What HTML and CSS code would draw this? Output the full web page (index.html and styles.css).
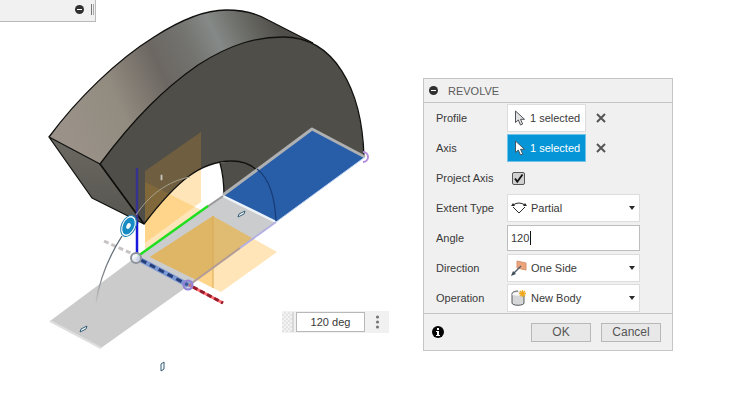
FILE: index.html
```html
<!DOCTYPE html>
<html lang="en">
<head>
<meta charset="utf-8">
<title>Revolve</title>
<link rel="stylesheet" href="styles.css">
</head>
<body>
<main class="workspace">
  <svg class="model" viewBox="0 0 400 403" aria-hidden="true">
    <defs>
      <linearGradient id="outer" gradientUnits="userSpaceOnUse" x1="75" y1="150" x2="290" y2="50">
        <stop offset="0" stop-color="#9a9288"/>
        <stop offset=".25" stop-color="#928b80"/>
        <stop offset=".47" stop-color="#6c6762"/>
        <stop offset=".62" stop-color="#73736f"/>
        <stop offset=".74" stop-color="#858987"/>
        <stop offset=".86" stop-color="#6c6d68"/>
        <stop offset="1" stop-color="#504e48"/>
      </linearGradient>
      <linearGradient id="end" x1="0" y1="0" x2="0" y2="1">
        <stop offset="0" stop-color="#6c6963"/>
        <stop offset="1" stop-color="#57554f"/>
      </linearGradient>
      <linearGradient id="arcfade" x1="0" y1="0" x2="0" y2="1">
        <stop offset="0" stop-color="#52606f"/>
        <stop offset=".6" stop-color="#84898e"/>
        <stop offset="1" stop-color="#c4c4c4"/>
      </linearGradient>
      <clipPath id="face">
        <path d="M100 164C135 117 165 88 198 65C232 43 258 37 283 37C334 37 362 88 364 157L276 222C275 184 258 161 232 161C200 161 176 182 144 224Z"/>
      </clipPath>
      <clipPath id="sketch"><path d="M136 257L223 196L276 222L188 286Z"/></clipPath>
    </defs>

    <!-- sketch profile lying on the ground plane -->
    <path fill="#cbcbcb" d="M50 321L136 257L188 286L101 348Z"/>
    <path d="M50 321L101 348" stroke="#dedede" stroke-width="2"/>
    <path fill="#cbcccd" d="M136 257L223 196L276 222L188 286Z"/>

    <!-- origin planes -->
    <g fill="#ffbd4a" fill-opacity=".4">
      <path d="M145 165L201 132V202L145 243Z"/>
      <path d="M145 182L213 216V288L145 252Z"/>
      <path d="M150 257L213 216L277 252L221 292Z"/>
    </g>
    <g clip-path="url(#sketch)">
      <path fill="#cbcccd" d="M136 257L223 196L276 222L188 286Z"/>
      <path fill="#e0bb72" d="M150 257L213 216L277 252L221 292Z"/>
      <path fill="#dfb665" d="M150 257L213 216V288Z"/>
    </g>
    <path d="M213 216V288" stroke="#d9a957"/>

    <!-- revolved body -->
    <path fill="#504e48" d="M220 163C223 174 224 184 224 196L276 222C275 184 258 161 232 161Z"/>
    <path fill="url(#outer)" d="M49 137C77 99 117 60 154 37C182 19 206 10 226 10C244 10 258 14 268 20L313 43L330 60L100 164Z"/>
    <path fill="url(#end)" d="M49 137L100 164L144 224L92 198Z"/>
    <path fill="#504e48" d="M100 164C135 117 165 88 198 65C232 43 258 37 283 37C334 37 362 88 364 157L276 222C275 184 258 161 232 161C200 161 176 182 144 224Z"/>
    <g clip-path="url(#face)" fill="#a27b35">
      <path fill-opacity=".38" d="M145 171L201 132V202L145 243Z"/>
      <path fill-opacity=".35" d="M145 182L213 216V288L145 252Z"/>
    </g>
    <g fill="none" stroke="#11110f" stroke-width="1.3" stroke-linejoin="round">
      <path d="M49 137C77 99 117 60 154 37C182 19 206 10 226 10C244 10 258 14 268 20L313 43"/>
      <path d="M49 137L100 164L144 224L92 198Z"/>
      <path d="M144 224L100 164C135 117 165 88 198 65C232 43 258 37 283 37C334 37 362 88 364 157"/>
      <path d="M144 224C176 182 200 161 232 161C258 161 275 184 276 222M220 163C223 174 224 184 224 196"/>
    </g>

    <!-- selected profile -->
    <path fill="#285da8" d="M223 196L312 129L365 157L276 222Z"/>
    <path d="M223 195L312 129L365 157" fill="none" stroke="#aeb0b2" stroke-width="3" stroke-linejoin="round"/>
    <path d="M223 196L276 222" stroke="#edf3fb" stroke-width="2.5"/>
    <path d="M276 222L365 157" stroke="#b9d0f2"/>
    <path d="M257 169C270 179 275 199 276 221" fill="none" stroke="#183d78" stroke-width="1.3"/>
    <path d="M363 152A5 5 0 1 1 363 162" fill="none" stroke="#b58bdc" stroke-width="2"/>

    <!-- axes -->
    <path d="M276 222L240 248" stroke="#b3b0e4" stroke-width="2"/>
    <path d="M240 248L188 286" stroke="#b29c98" stroke-width="2"/>
    <path d="M207 207L223 196" stroke="#989898" stroke-width="2"/>
    <path d="M138 256L208 206" stroke="#20df20" stroke-width="2.5"/>
    <path d="M137 168V224" stroke="#35338f" stroke-width="2.5"/>
    <path d="M137 222V254" stroke="#1919dc" stroke-width="2.5"/>
    <path d="M104 241L133 254" stroke="#c8c4c4" stroke-width="3" stroke-dasharray="5 3"/>
    <path d="M137 258L188 285" stroke="#7a98d4" stroke-width="5"/>
    <path d="M141 260L188 285" stroke="#253d78" stroke-width="3" stroke-dasharray="6 4"/>
    <path d="M189 285L223 303" stroke="#ff6b70" stroke-width="3"/>
    <path d="M193 287L223 303" stroke="#931d2d" stroke-width="3" stroke-dasharray="5 3"/>
    <circle cx="136" cy="258" r="5" fill="#ebeff5" fill-opacity=".7" stroke="#8e949d" stroke-width="2"/>
    <circle cx="188" cy="285" r="4.5" fill="#6581c4" fill-opacity=".4" stroke="#9180d5" stroke-width="2"/>

    <!-- rotation manipulator -->
    <path d="M190 177C168 181 149 195 136 215" fill="none" stroke="#a5a18f"/>
    <path d="M122 236C108 258 99 282 96 303" fill="none" stroke="url(#arcfade)" stroke-width="1.3"/>
    <g transform="rotate(25 128.500 226)">
      <ellipse cx="128.500" cy="226" rx="7" ry="11" fill="#fff" stroke="#2584af"/>
      <ellipse cx="128.500" cy="226" rx="5.500" ry="9" fill="#168bc4"/>
      <ellipse cx="128.500" cy="226" rx="2" ry="3" fill="#fff"/>
    </g>
    <g fill="#f8fcff" stroke="#355d75" stroke-linejoin="round">
      <path d="M80 332L81 329L87 326L86 329Z"/>
      <path d="M238 217L239 214L245 211L244 214Z"/>
      <path d="M161 371V364L164 362V369Z"/>
      <path stroke="#b8b5a8" d="M161 175H162V180H161Z"/>
    </g>
  </svg>

  <div class="browser-bar">
    <button class="round-minus" aria-label="Collapse browser"></button>
    <span class="bar-grip"></span>
  </div>

  <div class="value-box">
    <span class="value-grip"></span>
    <input class="value-input" aria-label="Angle value" value="120 deg">
    <button class="more" aria-label="More options">
      <svg width="5" height="15" viewBox="0 0 5 15" fill="#777"><circle cx="2.500" cy="2" r="1.600"/><circle cx="2.500" cy="7" r="1.600"/><circle cx="2.500" cy="12" r="1.600"/></svg>
    </button>
  </div>

  <form class="dialog">
    <header class="dialog-head">
      <button type="button" class="round-minus" aria-label="Collapse dialog"></button>
      <h1 class="dialog-title">REVOLVE</h1>
    </header>
    <div class="fields">
      <div class="row">
        <label class="label" for="profile">Profile</label>
        <button type="button" class="pick" id="profile">
          <svg width="12" height="17" viewBox="0 0 12 17"><path d="M1.500 1V12.500L4.300 10L6.500 15L8.700 14L6.500 9.300H10.500Z" fill="#e2e2e2" stroke="#50545a"/></svg>
          1 selected
        </button>
        <button type="button" class="clear" aria-label="Clear profile"><svg width="10" height="10" viewBox="0 0 10 10"><path d="M1 1L9 9M9 1L1 9" stroke="#555" stroke-width="2"/></svg></button>
      </div>
      <div class="row">
        <label class="label" for="axis">Axis</label>
        <button type="button" class="pick pick-active" id="axis">
          <svg width="12" height="17" viewBox="0 0 12 17"><path d="M1.500 1V12.500L4.300 10L6.500 15L8.700 14L6.500 9.300H10.500Z" fill="#fff" stroke="#435866"/></svg>
          1 selected
        </button>
        <button type="button" class="clear" aria-label="Clear axis"><svg width="10" height="10" viewBox="0 0 10 10"><path d="M1 1L9 9M9 1L1 9" stroke="#555" stroke-width="2"/></svg></button>
      </div>
      <div class="row">
        <label class="label" for="project">Project Axis</label>
        <span class="tick"><input type="checkbox" id="project" checked><svg class="tick-mark" width="13" height="13" viewBox="0 0 13 13"><path d="M3 6.500L5.300 9.800L10.500 2.500" fill="none" stroke="#111" stroke-width="1.800"/></svg></span>
      </div>
      <div class="row">
        <label class="label" for="extent">Extent Type</label>
        <span class="choice">
          <svg class="choice-icon" width="18" height="18" viewBox="0 0 18 18" fill="none" stroke="#292929"><path d="M3 8L9 14L15 8"/><path d="M3 6Q9 2 15 6"/><path fill="#292929" stroke="none" d="M1 7L3 4L5 7ZM17 7L15 4L13 7Z"/></svg>
          <select id="extent"><option>Partial</option><option>Full</option></select>
        </span>
      </div>
      <div class="row">
        <label class="label" for="angle">Angle</label>
        <span class="angle-box"><input id="angle" value="120"><span class="caret"></span></span>
      </div>
      <div class="row">
        <label class="label" for="direction">Direction</label>
        <span class="choice">
          <svg class="choice-icon" width="18" height="18" viewBox="0 0 18 18"><path d="M7 2L16 4V11L7 9Z" fill="#eda47b" stroke="#d49370"/><path d="M11 7L3 15" stroke="#56616a" stroke-width="1.500"/><path d="M1 17L3 12L6 15Z" fill="#45515a"/></svg>
          <select id="direction"><option>One Side</option><option>Two Sides</option></select>
        </span>
      </div>
      <div class="row">
        <label class="label" for="operation">Operation</label>
        <span class="choice">
          <svg class="choice-icon" width="18" height="18" viewBox="0 0 18 18"><path d="M2 5V14C2 17 14 17 14 14V6" fill="#d5d7d9" stroke="#55585c"/><path d="M2 5C2 2 14 2 14 5S2 8 2 5" fill="#f7f7f7" stroke="#d0d2d4"/><path d="M2 5C2 3 5 2 8 2" fill="none" stroke="#55585c"/><path d="M12.500 1V8M9 4.500H16M10 2L15 7M15 2L10 7" stroke="#f0a91d" stroke-width="1.300"/></svg>
          <select id="operation"><option>New Body</option><option>Join</option><option>Cut</option></select>
        </span>
      </div>
    </div>
    <footer class="dialog-foot">
      <button type="button" class="info" aria-label="Information"><svg width="12" height="12" viewBox="0 0 12 12"><circle cx="6" cy="6" r="6" fill="#050505"/><path d="M5 2H7V4H5ZM4 5H7V9H8V10H4V9H5V6H4Z" fill="#fff"/></svg></button>
      <button type="button" class="action">OK</button>
      <button type="button" class="action">Cancel</button>
    </footer>
  </form>
</main>
</body>
</html>
```

FILE: styles.css
```css
* { box-sizing: border-box; }
body { margin: 0; background: #fff; color: #393939; font: 11px/14px "Liberation Sans", Arial, sans-serif; }
button, input, select { margin: 0; padding: 0; border: 0; color: inherit; font: inherit; }
button { background: none; }
svg { display: block; flex: none; }
.workspace { position: relative; min-height: 100vh; overflow: hidden; }
.model { width: 400px; }

.browser-bar { position: absolute; left: 0; top: 0; width: 96px; height: 22px; display: flex; justify-content: flex-end; align-items: center; gap: 7px; padding: 0 1px 3px 0; background: #f1f1f1; border-right: 1px solid #bbb; border-bottom: 1px solid #b8b8b8; }
.bar-grip { width: 3px; height: 11px; border-left: 1px solid #777; border-right: 1px solid #aaa; }
.round-minus { width: 9px; height: 9px; border-radius: 50%; background: linear-gradient(#fff, #fff) center / 5px 1px no-repeat #303030; }

.value-box { position: absolute; left: 282px; top: 311px; display: flex; align-items: center; height: 22px; background: #f1f1f1; }
.value-grip { width: 12px; height: 20px; margin-right: 2px; border-right: 2px solid #d8d8d8; background: conic-gradient(#e4e4e4 25%, #f3f3f3 0 50%, #e4e4e4 0 75%, #f3f3f3 0) 0 0 / 4px 4px; }
.value-input { width: 69px; height: 20px; border: 1px solid #b8b8b8; background: #fff; text-align: center; }
.more { width: 24px; display: flex; justify-content: center; }

.dialog { position: absolute; left: 423px; top: 78px; width: 250px; background: #f0f0f0; border: 1px solid #c5c5c5; }
.dialog-head { display: flex; align-items: center; gap: 10px; height: 24px; padding-left: 5px; border-bottom: 1px solid #c5c5c5; }
.dialog-title { margin: 0; color: #5b5b5b; font: inherit; }
.row { display: grid; grid-template-columns: 71px 133px 1fr; align-items: center; height: 30px; padding-left: 12px; }
.pick { display: flex; align-items: center; gap: 4px; width: 79px; height: 28px; padding-left: 6px; border: 1px solid #ddd; background: #fff; white-space: nowrap; }
.pick-active { border-color: #70c4ea; background: #0696d7; color: #fff; }
.row:has(.pick) { grid-template-columns: 71px 89px 1fr; }
.clear { width: 10px; }
.tick { position: relative; width: 13px; height: 13px; margin-left: 5px; }
.tick input { display: block; appearance: none; width: 13px; height: 13px; border: 1px solid #555; border-radius: 2px; background: #d0d0d0; }
.tick-mark { position: absolute; inset: 0; pointer-events: none; }
.choice { position: relative; }
.choice-icon { position: absolute; left: 3px; top: 5px; pointer-events: none; }
.choice::after { content: ""; position: absolute; right: 5px; top: 12px; border: 3px solid transparent; border-top: 4px solid #292929; border-bottom: 0; pointer-events: none; }
.choice select { display: block; appearance: none; width: 100%; height: 28px; padding-left: 23px; border: 1px solid #ddd; background: #fff; }
.angle-box { position: relative; }
.angle-box input { display: block; width: 100%; height: 26px; padding-left: 3px; border: 1px solid #bdbdbd; background: #fff; }
.caret { position: absolute; left: 23px; top: 6px; width: 1px; height: 14px; background: #111; }
.dialog-foot { display: flex; align-items: center; gap: 10px; height: 37px; padding: 0 11px 0 8px; border-top: 1px solid #c5c5c5; }
.info { margin-right: auto; }
.action { width: 60px; height: 19px; border: 1px solid #b8b8b8; background: #e8e8e8; color: #555; font-size: 12px; }
```
